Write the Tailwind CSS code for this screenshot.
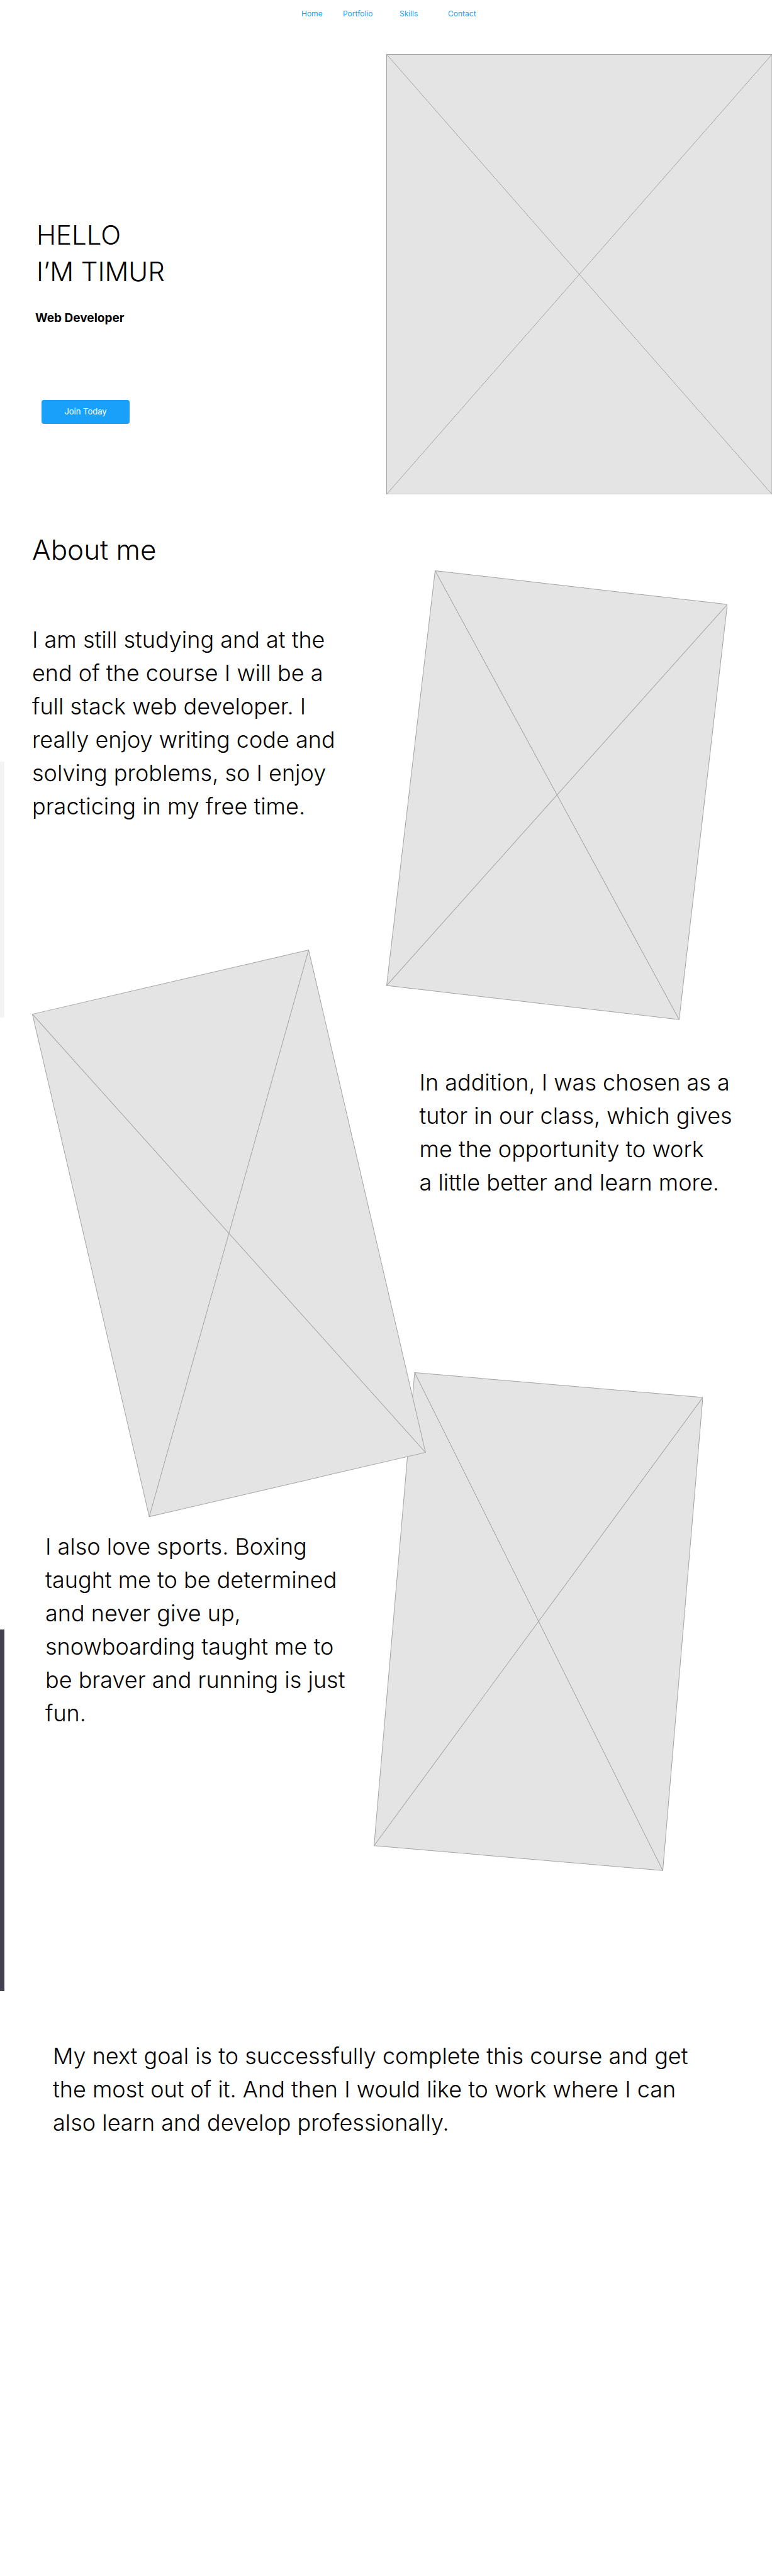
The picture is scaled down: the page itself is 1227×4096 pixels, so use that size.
<!DOCTYPE html>
<html lang="en">
<head>
<meta charset="utf-8">
<meta name="viewport" content="width=device-width, initial-scale=1">
<title>Timur – Web Developer</title>
<script src="https://cdn.jsdelivr.net/npm/@tailwindcss/browser@4"></script>
</head>
<body class="overflow-x-hidden bg-white font-['Inter',sans-serif] text-black">

<header class="flex h-[86px] justify-center pt-[13px]">
  <nav class="flex pl-1 text-xs leading-[18px] text-[#18a0fb]" aria-label="Main">
    <a href="#home" class="w-[66px]">Home</a>
    <a href="#about" class="w-[90px]">Portfolio</a>
    <a href="#skills" class="w-[77px]">Skills</a>
    <a href="#contact" class="w-10">Contact</a>
  </nav>
</header>

<main>
  <section id="home" class="flex">
    <div class="w-1/2 pt-[259px] pl-[58px]">
      <h1 class="text-[42px] leading-[58px] font-light">HELLO<br>I’M TIMUR</h1>
      <p class="mt-[33px] -ml-0.5 text-[19px] leading-6 font-bold">Web Developer</p>
      <button type="button" class="mt-[118px] ml-2 h-[38px] w-[140px] rounded bg-[#18a0fb] text-[13px] text-white">Join Today</button>
    </div>
    <svg class="block w-1/2" viewBox="0 0 614 701" role="img" aria-label="Portrait placeholder" fill="none" stroke="#a3a3a3">
      <rect x="0.5" y="0.5" width="613" height="700" fill="#e4e4e4"/>
      <path d="M0.5 0.5 613.5 700.5M613.5 0.5 0.5 700.5"/>
    </svg>
  </section>

  <div class="relative">
    <!-- Colour strip along the left edge -->
    <div class="absolute top-0 left-0 w-[7px] pt-[425px]" aria-hidden="true">
      <div class="h-[407px] bg-[#f4f4f4]"></div>
      <div class="mt-[973px] h-[575px] bg-[#434150]"></div>
    </div>

    <section id="about" class="flex items-start text-[36px] leading-[53px] font-light whitespace-nowrap">
      <div class="relative z-10 w-1/2 pt-[59px]">
        <h2 class="pl-[51px] text-[44px] leading-[58px]">About me</h2>
        <p class="mt-[88px] pl-[51px]">I am still studying and at the<br>end of the course I will be a<br>full stack web developer. I<br>really enjoy writing code and<br>solving problems, so I enjoy<br>practicing in my free time.</p>
        <svg class="mt-[201px] ml-[51px] block w-[102%] max-w-none" viewBox="0 0 625 901" role="img" aria-label="Photo placeholder" fill="none" stroke="#a3a3a3">
          <path fill="#e4e4e4" d="M0.5 102.5 439 0.5 624.5 798.5 186 900.5Z"/>
          <path d="M0.5 102.5 624.5 798.5M439 0.5 186 900.5"/>
        </svg>
        <p class="mt-5 pl-[72px]">I also love sports. Boxing<br>taught me to be determined<br>and never give up,<br>snowboarding taught me to<br>be braver and running is just<br>fun.</p>
      </div>
      <div class="w-1/2 pt-[121px]">
        <div class="pr-[71px]">
          <svg class="block w-full" viewBox="0 0 542 714" role="img" aria-label="Photo placeholder" fill="none" stroke="#a3a3a3">
            <path fill="#e4e4e4" d="M77.5 0.5 541.5 54 465 713.5 0.5 659.5Z"/>
            <path d="M77.5 0.5 465 713.5M541.5 54 0.5 659.5"/>
          </svg>
        </div>
        <p class="mt-[73px] pl-[53px]">In addition, I was chosen as a<br>tutor in our class, which gives<br>me the opportunity to work<br>a little better and learn more.</p>
        <div class="mt-[275px] -ml-5 pr-[110px]">
          <svg class="block w-full" viewBox="0 0 523 792" role="img" aria-label="Photo placeholder" fill="none" stroke="#a3a3a3">
            <path fill="#e4e4e4" d="M65 0.5 522.5 40 459 791.5 0.5 752Z"/>
            <path d="M65 0.5 459 791.5M522.5 40 0.5 752"/>
          </svg>
        </div>
      </div>
    </section>

    <section id="skills" class="px-[84px] pt-[268px] pb-[690px] text-[36px] leading-[53px] font-light whitespace-nowrap">
      <p>My next goal is to successfully complete this course and get<br>the most out of it. And then I would like to work where I can<br>also learn and develop professionally.</p>
    </section>
  </div>
</main>
</body>
</html>
